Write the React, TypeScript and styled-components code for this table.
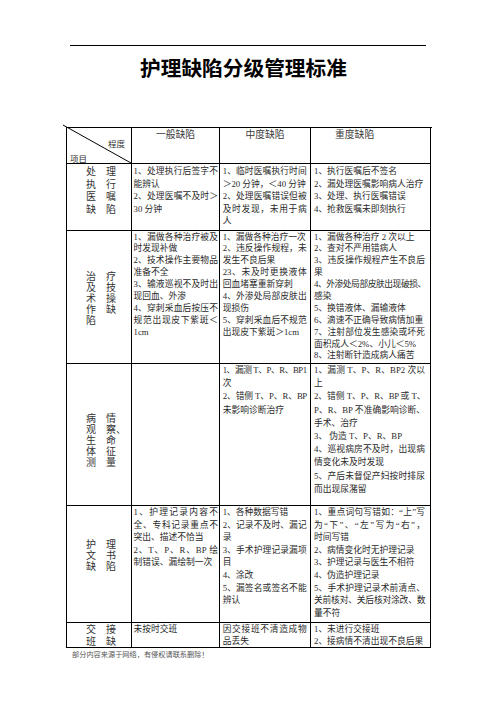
import React from 'react';
import styled, { createGlobalStyle } from 'styled-components';

const Global = createGlobalStyle`
  html, body { margin: 0; padding: 0; background: #fff; }
  body {
    font-family: "Liberation Serif", "Noto Sans CJK SC", serif;
    color: #2a2a2a;
  }
`;

const Page = styled.div`
  width: 496px;
  height: 702px;
  box-sizing: border-box;
  padding-top: 45px;
  display: flex;
  flex-direction: column;
`;

const Rule = styled.div`
  margin: 0 70px;
  height: 0;
  border-top: 1.3px solid #000;
`;

const Title = styled.h1`
  margin: 9px 0 0 140px;
  font-family: "Noto Sans CJK SC", sans-serif;
  font-weight: 700;
  font-size: 20.7px;
  line-height: 24px;
  color: #000;
`;

const Grid = styled.div`
  margin: 48px 0 0 66px;
  width: 365px;
  display: grid;
  grid-template-columns: 65px 88px 91px 120px;
  grid-template-rows: 36px 67px 133px 142px 117px 25px;
  border-left: 1px solid #000;
  border-top: 1px solid #000;
`;

const Cell = styled.div<{ $pl: number; $pr: number; $pt: number }>`
  box-sizing: border-box;
  border-right: 1px solid #000;
  border-bottom: 1px solid #000;
  padding: ${(p) => p.$pt}px ${(p) => p.$pr}px 0 ${(p) => p.$pl}px;
  min-width: 0;
  overflow: hidden;
`;

const CornerCell = styled.div`
  position: relative;
  box-sizing: border-box;
  border-right: 1px solid #000;
  border-bottom: 1px solid #000;
  padding: 9px 6px 0 3px;
  font-family: "Noto Sans CJK SC", sans-serif;
  font-size: 8.5px;
  line-height: 12px;
  color: #333;
`;

const CornerTop = styled.div`
  text-align: right;
`;

const CornerBottom = styled.div`
  margin-top: 3px;
  text-align: left;
`;

const Diagonal = styled.svg`
  position: absolute;
  left: 0;
  top: 0;
  overflow: visible;
  pointer-events: none;
`;

const HeadCell = styled.div<{ $align: 'center' | 'left'; $pl: number }>`
  box-sizing: border-box;
  border-right: 1px solid #000;
  border-bottom: 1px solid #000;
  padding: 0 0 0 ${(p) => p.$pl}px;
  text-align: ${(p) => p.$align};
  font-family: "Noto Sans CJK SC", sans-serif;
  font-size: 9.8px;
  line-height: 12px;
  color: #3a3a3a;
`;

const LabelCell = styled.div<{ $top: number }>`
  box-sizing: border-box;
  border-right: 1px solid #000;
  border-bottom: 1px solid #000;
  padding: ${(p) => p.$top}px 0 0 19px;
`;

const LabelLine = styled.div<{ $lh: number }>`
  display: flex;
  gap: 10px;
  font-family: "Noto Sans CJK SC", sans-serif;
  font-size: 10px;
  line-height: ${(p) => p.$lh}px;
  height: ${(p) => p.$lh}px;
  color: #333;
  white-space: nowrap;
`;

const LabelChar = styled.span`
  display: inline-block;
  width: 10px;
`;

const Line = styled.div<{ $justify: boolean; $lh: number; $tight: boolean }>`
  font-size: 8.75px;
  line-height: ${(p) => p.$lh}px;
  height: ${(p) => p.$lh}px;
  white-space: nowrap;
  text-align: left;
  text-align-last: ${(p) => (p.$justify ? 'justify' : 'left')};
  letter-spacing: ${(p) => (p.$tight ? '-0.45px' : '0')};
`;

const Footer = styled.div`
  margin: 2px 0 0 72px;
  font-family: "Noto Sans CJK SC", sans-serif;
  font-size: 7.2px;
  line-height: 9px;
  color: #555;
`;

type Para = string[];
type Row = {
  labelTop: number;
  labelLh: number;
  label: [string, string][];
  lh: number;
  pt: number;
  cells: Para[][];
};

const tight = new Set<string>([
  '1、漏测 T、P、R、BP1',
  '2、错侧 T、P、R、BP',
  '2、错侧 T、P、R、BP 或 T、',
  '4、外渗处局部皮肤出现破损、',
  '关前核对、关后核对涂改、数',
]);

const rows: Row[] = [
  {
    labelTop: 1,
    labelLh: 12.6,
    label: [['处', '理'], ['执', '行'], ['医', '嘱'], ['缺', '陷']],
    lh: 12.6,
    pt: 1,
    cells: [
      [['1、处理执行后签字不', '能辨认'], ['2、处理医嘱不及时＞', '30 分钟']],
      [['1、临时医嘱执行时间', '＞20 分钟，＜40 分钟'], ['2、处理医嘱错误但被', '及时发现，未用于病', '人']],
      [['1、执行医嘱后不签名'], ['2、漏处理医嘱影响病人治疗'], ['3、处理、执行医嘱错误'], ['4、抢救医嘱未即刻执行']],
    ],
  },
  {
    labelTop: 39,
    labelLh: 11,
    label: [['治', '疗'], ['及', '技'], ['术', '操'], ['作', '缺'], ['陷', '']],
    lh: 11.9,
    pt: 0.5,
    cells: [
      [
        ['1、漏做各种治疗被及', '时发现补做'],
        ['2、技术操作主要物品', '准备不全'],
        ['3、输液巡视不及时出', '现回血、外渗'],
        ['4、穿刺采血后按压不', '规范出现皮下紫斑＜', '1cm'],
      ],
      [
        ['1、漏做各种治疗一次'],
        ['2、违反操作规程，未', '发生不良后果'],
        ['23、未及时更换液体', '回血堵塞重新穿刺'],
        ['4、外渗处局部皮肤出', '现损伤'],
        ['5、穿刺采血后不规范', '出现皮下紫斑＞1cm'],
      ],
      [
        ['1、漏做各种治疗 2 次以上'],
        ['2、查对不严用错病人'],
        ['3、违反操作规程产生不良后', '果'],
        ['4、外渗处局部皮肤出现破损、', '感染'],
        ['5、换错液体、漏输液体'],
        ['6、滴速不正确导致病情加重'],
        ['7、注射部位发生感染或坏死', '面积成人＜2%、小儿＜5%'],
        ['8、注射断针造成病人痛苦'],
      ],
    ],
  },
  {
    labelTop: 48,
    labelLh: 11,
    label: [['病', '情'], ['观', '察、'], ['生', '命'], ['体', '征'], ['测', '量']],
    lh: 13.2,
    pt: 0,
    cells: [
      [],
      [['1、漏测 T、P、R、BP1', '次'], ['2、错侧 T、P、R、BP', '未影响诊断治疗']],
      [
        ['1、漏测 T、P、R、BP2 次以', '上'],
        ['2、错侧 T、P、R、BP 或 T、', 'P、R、BP 不准确影响诊断、', '手术、治疗'],
        ['3、 伪造 T、P、R、BP'],
        ['4、巡视病房不及时，出现病', '情变化未及时发现'],
        ['5、产后未督促产妇按时排尿', '而出现尿潴留'],
      ],
    ],
  },
  {
    labelTop: 32,
    labelLh: 11,
    label: [['护', '理'], ['文', '书'], ['缺', '陷']],
    lh: 12.6,
    pt: 0,
    cells: [
      [['1、护理记录内容不', '全、专科记录重点不', '突出、描述不恰当'], ['2、T、P、R、BP 绘', '制错误、漏绘制一次']],
      [
        ['1、各种数据写错'],
        ['2、记录不及时、漏记', '录'],
        ['3、手术护理记录漏项', '目'],
        ['4、涂改'],
        ['5、漏签名或签名不能', '辨认'],
      ],
      [
        ['1、重点词句写错如：“上”写', '为“下”、“左”写为“右”，', '时间写错'],
        ['2、病情变化时无护理记录'],
        ['3、护理记录与医生不相符'],
        ['4、伪造护理记录'],
        ['5、手术护理记录术前清点、', '关前核对、关后核对涂改、数', '量不符'],
      ],
    ],
  },
  {
    labelTop: 0,
    labelLh: 11.5,
    label: [['交', '接'], ['班', '缺']],
    lh: 12,
    pt: 0,
    cells: [
      [['未按时交班']],
      [['因交接班不清造成物', '品丢失']],
      [['1、未进行交接班'], ['2、接病情不清出现不良后果']],
    ],
  },
];

const pads: [number, number][] = [
  [1.5, 1],
  [2.7, 3.3],
  [3, 5],
];

export default function App() {
  return (
    <Page>
      <Global />
      <Rule />
      <Title>护理缺陷分级管理标准</Title>
      <Grid>
        <CornerCell>
          <Diagonal width={64} height={35}>
            <line x1={-4} y1={-3} x2={64} y2={35} stroke="#000" strokeWidth={1} />
          </Diagonal>
          <CornerTop>程度</CornerTop>
          <CornerBottom>项目</CornerBottom>
        </CornerCell>
        <HeadCell $align="center" $pl={0}>一般缺陷</HeadCell>
        <HeadCell $align="center" $pl={0}>中度缺陷</HeadCell>
        <HeadCell $align="left" $pl={24}>重度缺陷</HeadCell>
        {rows.map((row, ri) => (
          <React.Fragment key={ri}>
            <LabelCell $top={row.labelTop}>
              {row.label.map(([a, b], li) => (
                <LabelLine key={li} $lh={row.labelLh}>
                  <LabelChar>{a}</LabelChar>
                  <span>{b}</span>
                </LabelLine>
              ))}
            </LabelCell>
            {row.cells.map((paras, ci) => (
              <Cell key={ci} $pl={pads[ci][0]} $pr={pads[ci][1]} $pt={row.pt}>
                {paras.map((para, pi) =>
                  para.map((text, li) => (
                    <Line
                      key={`${pi}-${li}`}
                      $lh={row.lh}
                      $justify={li < para.length - 1}
                      $tight={tight.has(text)}
                    >
                      {text}
                    </Line>
                  ))
                )}
              </Cell>
            ))}
          </React.Fragment>
        ))}
      </Grid>
      <Footer>部分内容来源于网络，有侵权请联系删除！</Footer>
    </Page>
  );
}
